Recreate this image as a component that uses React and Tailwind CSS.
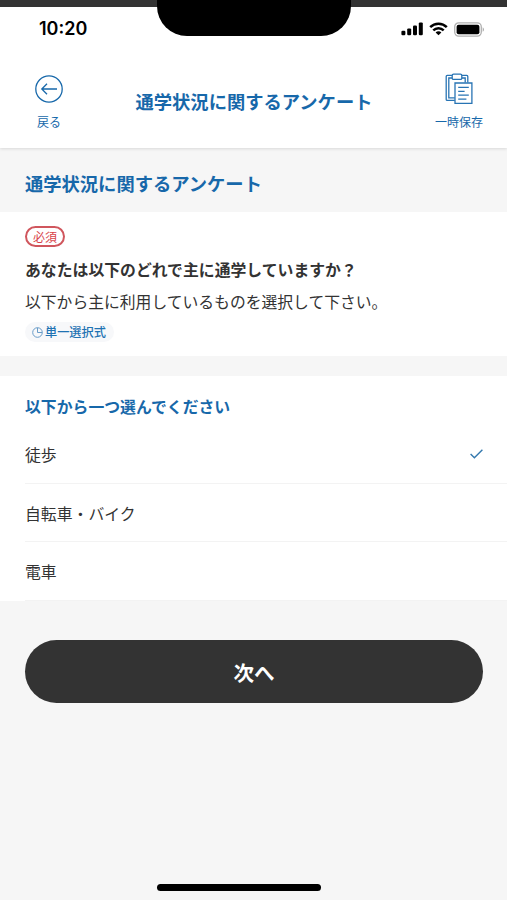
const OPTIONS = [
  { label: "徒歩", selected: true },
  { label: "自転車・バイク", selected: false },
  { label: "電車", selected: false },
];

function SignalIcon() {
  return (
    <svg width="22" height="14" viewBox="0 0 22 14" fill="#000">
      <rect x="0.4" y="8.7" width="4" height="4.6" rx="1.2" />
      <rect x="6.2" y="6.4" width="4" height="6.9" rx="1.2" />
      <rect x="12" y="3.4" width="4" height="9.9" rx="1.2" />
      <rect x="17.8" y="0.4" width="4" height="12.9" rx="1.2" />
    </svg>
  );
}

function WifiIcon() {
  return (
    <svg width="19" height="14" viewBox="0 0 19 14" fill="none" stroke="#000" strokeWidth="2.5">
      <path d="M1.2 5.2C5.8 0.6 13.2 0.6 17.8 5.2" />
      <path d="M4.3 8.4C7.2 5.5 11.8 5.5 14.7 8.4" />
      <path d="M9.5 13.3L6.6 10.4C8.2 9 10.8 9 12.4 10.4Z" fill="#000" stroke="none" />
    </svg>
  );
}

function BatteryIcon() {
  return (
    <svg width="31" height="15" viewBox="0 0 31 15">
      <rect x="0.7" y="0.9" width="26.6" height="13.2" rx="4" fill="none" stroke="#b0b0b0" strokeWidth="1.3" />
      <rect x="2.6" y="2.7" width="22.8" height="9.6" rx="2" fill="#000" />
      <path d="M28.7 5.2C30.4 6 30.4 9 28.7 9.8Z" fill="#a9a9a9" />
    </svg>
  );
}

function BackIcon() {
  return (
    <svg width="28" height="28" viewBox="0 0 28 28" fill="none" stroke="#1768aa" strokeWidth="1.3">
      <circle cx="14" cy="14" r="13.2" />
      <path d="M22 14H6.8M12 8.8L6.8 14L12 19.2" />
    </svg>
  );
}

function ClipboardIcon() {
  return (
    <svg width="28" height="32" viewBox="0 0 28 32" fill="none" stroke="#2874b4" strokeWidth="1.3">
      <path d="M7 2.4H2.2Q1.2 2.4 1.2 3.4V26.4Q1.2 27.4 2.2 27.4H9.8M17 2.4H21.8Q22.8 2.4 22.8 3.4V9.4" />
      <path d="M7 5H3.8V24.8H9.8M17 5H20.2V9.4" />
      <path d="M8.6 1.2H15.4Q16.8 1.2 16.8 2.6V5.2Q16.8 6.4 15.4 6.4H8.6Q7.2 6.4 7.2 5.2V2.6Q7.2 1.2 8.6 1.2Z" />
      <path d="M10 10H26.9V30.3H10Z" />
      <path d="M13.2 14.4H23.8M13.2 18.3H19.6M13.2 22.2H23.8M13.2 26.1H21.4" />
    </svg>
  );
}

function ClockIcon() {
  return (
    <svg width="11" height="11" viewBox="0 0 11 11" fill="none" stroke="#6a9cc8" strokeWidth="1">
      <circle cx="5.5" cy="5.5" r="4.8" />
      <path d="M5.5 0.8V5.5H10.2" />
    </svg>
  );
}

export default function App() {
  return (
    <div className="relative flex h-[900px] w-[507px] flex-col overflow-hidden bg-[#f6f6f6] font-['Noto_Sans_CJK_JP',sans-serif] text-[#333333]">
      <div className="h-[7px] shrink-0 bg-[#333333]" />
      <div className="absolute left-[157px] top-0 h-9 w-[194px] rounded-b-[30px] bg-black" />
      <header className="h-[141px] shrink-0 bg-white shadow-[0_1px_3px_rgba(0,0,0,0.12)]">
        <div className="flex h-11 items-center justify-between pl-[39px] pr-[22px]">
          <span className="font-['Inter',sans-serif] text-[18px] font-semibold leading-none text-black">10:20</span>
          <div className="flex items-center gap-[6px]">
            <SignalIcon />
            <WifiIcon />
            <BatteryIcon />
          </div>
        </div>
        <div className="flex h-[97px] justify-between pl-[25px] pr-6 text-[#1768aa]">
          <button className="flex w-12 flex-col items-center pt-6">
            <BackIcon />
            <span className="mt-[10px] text-[12px] leading-[18px]">戻る</span>
          </button>
          <h1 className="mt-9 whitespace-nowrap text-[18.3px] font-bold leading-7">通学状況に関するアンケート</h1>
          <button className="flex w-12 flex-col items-center pt-[22px]">
            <ClipboardIcon />
            <span className="mt-2 whitespace-nowrap text-[12px] leading-[18px]">一時保存</span>
          </button>
        </div>
      </header>
      <h2 className="flex h-16 shrink-0 items-center pl-[25px] pt-[7px] text-[18.3px] font-bold text-[#1768aa]">
        通学状況に関するアンケート
      </h2>
      <section className="flex h-[144px] shrink-0 flex-col items-start bg-white pl-[25px] pt-[14px]">
        <span className="flex h-[21px] w-10 items-center justify-center rounded-full border-2 border-[#d0565d] text-[12px] leading-none text-[#d8434a]">
          必須
        </span>
        <p className="mt-[11px] text-[15.85px] font-bold leading-6">あなたは以下のどれで主に通学していますか？</p>
        <p className="mt-2 text-[15.8px] leading-6">以下から主に利用しているものを選択して下さい。</p>
        <span className="mt-2 flex h-5 items-center gap-[2px] rounded-full bg-[#f7f8fa] pl-[7px] pr-2 text-[12.2px] font-medium leading-none text-[#1f73b3]">
          <ClockIcon />
          単一選択式
        </span>
      </section>
      <section className="mt-5 h-[225px] shrink-0 bg-white pl-[25px]">
        <h3 className="pt-[19px] text-[15.85px] font-bold leading-6 text-[#1768aa]">以下から一つ選んでください</h3>
        <ul className="mt-[6px]">
          {OPTIONS.map((option) => (
            <li
              key={option.label}
              className="flex h-[58.5px] items-center justify-between border-b-[1.5px] border-[#f3f3f3] pr-6 text-[15.85px]"
            >
              <span className="pt-[3px]">{option.label}</span>
              {option.selected && (
                <svg width="13" height="10" viewBox="0 0 13 10" fill="none" stroke="#3479ae" strokeWidth="1.4">
                  <path d="M0.6 5L4.4 8.8L12.4 0.8" />
                </svg>
              )}
            </li>
          ))}
        </ul>
      </section>
      <button className="ml-[25px] mr-6 mt-[39px] h-[63px] shrink-0 rounded-full bg-[#333333] pt-px text-[20.6px] font-bold text-white">
        次へ
      </button>
      <div className="mb-[9px] ml-[157px] mt-auto h-[7px] w-[164px] shrink-0 rounded-full bg-black" />
    </div>
  );
}
